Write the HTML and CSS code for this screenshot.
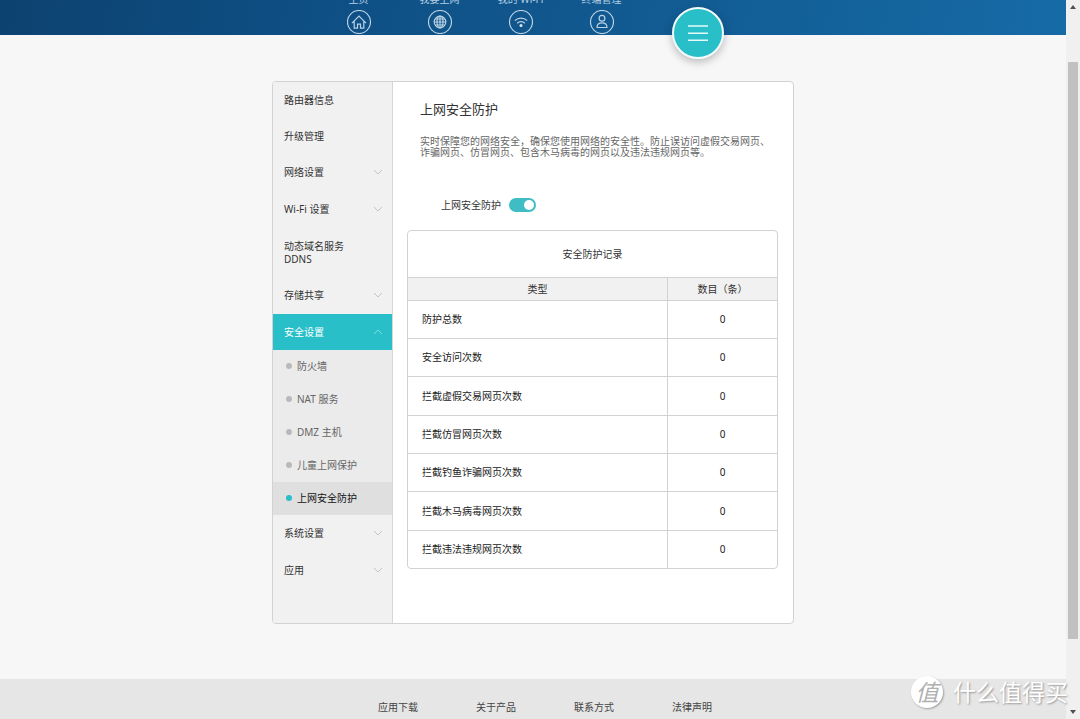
FILE: index.html
```html
<!DOCTYPE html>
<html lang="zh-CN">
<head>
<meta charset="utf-8">
<meta name="viewport" content="width=device-width, initial-scale=1">
<title>上网安全防护</title>
<link rel="stylesheet" href="styles.css">
</head>
<body class="window">
<div class="page">
  <header class="header">
    <div class="header-inner">
      <nav class="topnav">
        <a class="topnav-link" href="#">主页
          <svg class="topnav-icon" viewBox="0 0 24 24"><circle cx="12" cy="12" r="11.5"/><path d="M5 13.2 12 6l7 7.2M7.2 11.2v7h3.3v-4h3v4h3.3v-7"/></svg></a>
        <a class="topnav-link" href="#">我要上网
          <svg class="topnav-icon" viewBox="0 0 24 24"><circle cx="12" cy="12" r="11.5"/><circle cx="12" cy="12" r="5.8"/><path d="M12 6v12M6 12h12M7.2 9h9.6M7.2 15h9.6"/><ellipse cx="12" cy="12" rx="3" ry="5.8"/></svg></a>
        <a class="topnav-link" href="#">我的 Wi-Fi
          <svg class="topnav-icon" viewBox="0 0 24 24"><circle cx="12" cy="12" r="11.5"/><path d="M5.8 10.6a9 9 0 0 1 12.4 0M8.2 13.2a5.4 5.4 0 0 1 7.6 0"/><circle class="dot" cx="12" cy="15.6" r="1.5"/></svg></a>
        <a class="topnav-link" href="#">终端管理
          <svg class="topnav-icon" viewBox="0 0 24 24"><circle cx="12" cy="12" r="11.5"/><circle cx="12" cy="8.2" r="2.9"/><path d="M7 17.5c0-3 1.8-4.7 5-4.7s5 1.7 5 4.7z"/></svg></a>
      </nav>
      <button class="menu-button" type="button" aria-label="更多功能">
        <svg class="menu-icon" viewBox="0 0 20 16"><path d="M0 1h20M0 8.3h20M0 15.2h20"/></svg>
      </button>
    </div>
  </header>

  <main class="main">
    <div class="card">
      <nav class="sidebar">
        <a class="side-item" href="#">路由器信息</a>
        <a class="side-item" href="#">升级管理</a>
        <button class="side-item side-group" type="button" aria-expanded="false">网络设置<svg class="chevron" viewBox="0 0 10 6"><path d="M1 1l4 4 4-4"/></svg></button>
        <button class="side-item side-group" type="button" aria-expanded="false">Wi-Fi 设置<svg class="chevron" viewBox="0 0 10 6"><path d="M1 1l4 4 4-4"/></svg></button>
        <a class="side-item" href="#">动态域名服务<br>DDNS</a>
        <button class="side-item side-group" type="button" aria-expanded="false">存储共享<svg class="chevron" viewBox="0 0 10 6"><path d="M1 1l4 4 4-4"/></svg></button>
        <button class="side-item side-group side-open" type="button" aria-expanded="true">安全设置<svg class="chevron" viewBox="0 0 10 6"><path d="M1 5l4-4 4 4"/></svg></button>
        <ul class="submenu">
          <li><a class="sub-item" href="#">防火墙</a></li>
          <li><a class="sub-item" href="#">NAT 服务</a></li>
          <li><a class="sub-item" href="#">DMZ 主机</a></li>
          <li><a class="sub-item" href="#">儿童上网保护</a></li>
          <li><a class="sub-item sub-current" href="#" aria-current="page">上网安全防护</a></li>
        </ul>
        <button class="side-item side-group" type="button" aria-expanded="false">系统设置<svg class="chevron" viewBox="0 0 10 6"><path d="M1 1l4 4 4-4"/></svg></button>
        <button class="side-item side-group" type="button" aria-expanded="false">应用<svg class="chevron" viewBox="0 0 10 6"><path d="M1 1l4 4 4-4"/></svg></button>
      </nav>

      <section class="content">
        <h1 class="title">上网安全防护</h1>
        <p class="description">实时保障您的网络安全，确保您使用网络的安全性。防止误访问虚假交易网页、<br>诈骗网页、仿冒网页、包含木马病毒的网页以及违法违规网页等。</p>
        <div class="switch-row">
          <label for="protect">上网安全防护</label>
          <input class="switch" id="protect" type="checkbox" role="switch" checked>
        </div>
        <div class="record">
          <table class="record-table">
            <caption class="record-title">安全防护记录</caption>
            <thead>
              <tr><th scope="col">类型</th><th scope="col" class="count">数目（条）</th></tr>
            </thead>
            <tbody>
              <tr><td>防护总数</td><td class="count">0</td></tr>
              <tr><td>安全访问次数</td><td class="count">0</td></tr>
              <tr><td>拦截虚假交易网页次数</td><td class="count">0</td></tr>
              <tr><td>拦截仿冒网页次数</td><td class="count">0</td></tr>
              <tr><td>拦截钓鱼诈骗网页次数</td><td class="count">0</td></tr>
              <tr><td>拦截木马病毒网页次数</td><td class="count">0</td></tr>
              <tr><td>拦截违法违规网页次数</td><td class="count">0</td></tr>
            </tbody>
          </table>
        </div>
      </section>
    </div>
  </main>

  <footer class="footer">
    <a class="footer-link" href="#">应用下载</a>
    <a class="footer-link" href="#">关于产品</a>
    <a class="footer-link" href="#">联系方式</a>
    <a class="footer-link" href="#">法律声明</a>
  </footer>
</div>

<div class="scrollbar" aria-hidden="true">
  <svg class="arrow" viewBox="0 0 6 4"><path d="M3 0l3 4H0z"/></svg>
  <div class="thumb"></div>
  <svg class="arrow" viewBox="0 0 6 4"><path d="M0 0h6L3 4z"/></svg>
</div>

<div class="watermark"><span class="watermark-badge">值</span><span>什么值得买</span></div>
</body>
</html>
```
FILE: styles.css
```css
* { box-sizing: border-box; }

.window {
  position: relative;
  display: grid;
  grid-template-columns: 1fr 14px;
  min-height: 100vh;
  margin: 0;
  overflow: hidden;
  background: #f7f7f7;
  color: #333;
  font: 10px/13px "Noto Sans", "Noto Sans CJK SC", sans-serif;
}

a { color: inherit; text-decoration: none; }

.page { display: flex; flex-direction: column; }

/* Header */
.header {
  height: 35px;
  background: linear-gradient(100deg, #0c4270 0%, #0e4f84 30%, #125c94 65%, #166ba6 100%);
}
.header-inner {
  display: flex;
  align-items: flex-start;
  gap: 30px;
  width: 522px;
  margin: 0 auto;
  padding-left: 46px;
}
.topnav { display: flex; margin-top: -7px; }
.topnav-link {
  display: flex;
  flex-direction: column;
  align-items: center;
  gap: 4px;
  width: 81px;
  color: #b4cfe2;
}
.topnav-icon {
  width: 24px;
  height: 24px;
  fill: none;
  stroke: #b9d2e4;
  stroke-width: 1.2;
}
.topnav-icon .dot { fill: #dbe8f1; stroke: none; }
.menu-button {
  display: grid;
  place-items: center;
  width: 52px;
  height: 52px;
  margin-top: 7px;
  padding: 0;
  border: 2px solid #f4fbfc;
  border-radius: 50%;
  background: #28bfc8;
  box-shadow: 0 3px 8px rgba(0, 0, 0, 0.25);
}
.menu-icon { width: 20px; height: 16px; stroke: #e6fafa; stroke-width: 1.6; }

/* Card */
.main { flex: 1; padding: 46px 0 54px; }
.card {
  display: grid;
  grid-template-columns: 120px 1fr;
  width: 522px;
  margin: 0 auto;
  overflow: hidden;
  border: 1px solid #d2d2d2;
  border-radius: 4px;
  background: #fff;
}

/* Sidebar */
.sidebar { border-right: 1px solid #d6d6d6; background: #f1f1f1; }
.side-item {
  display: block;
  padding: 12px 11px 11px;
}
.side-group {
  display: flex;
  align-items: center;
  justify-content: space-between;
  width: 100%;
  padding: 12px 9px 12px 11px;
  border: 0;
  background: none;
  color: inherit;
  font: inherit;
}
.side-open { padding-bottom: 11px; background: #28bfc8; color: #fff; }
.chevron { width: 10px; height: 6px; margin-bottom: 2px; fill: none; stroke: #c4c4c4; }
.side-open .chevron { stroke: #82dce1; }

.submenu { margin: 0; padding: 0; list-style: none; background: #ebebeb; }
.sub-item {
  display: flex;
  align-items: center;
  gap: 5px;
  padding: 10px 0 10px 13px;
  color: #666;
}
.sub-item::before {
  content: "";
  width: 6px;
  height: 6px;
  margin-bottom: 2px;
  border-radius: 50%;
  background: #b9b9b9;
}
.sub-current { background: #dfdfdf; color: #111; }
.sub-current::before { background: #28bfc8; }

/* Content */
.content { padding: 17px 15px 54px 14px; }
.title { margin: 0 0 17px 13px; font-size: 13px; font-weight: 400; line-height: 20px; }
.description { margin: 0 0 40px 13px; color: #666; line-height: 11px; white-space: nowrap; }
.switch-row { display: flex; align-items: center; gap: 8px; margin: 0 0 18px 34px; }
.switch {
  display: flex;
  justify-content: flex-end;
  width: 27px;
  height: 14px;
  margin: 0;
  padding: 2px;
  border-radius: 7px;
  appearance: none;
  background: #40bdc4;
}
.switch::before {
  content: "";
  width: 10px;
  height: 10px;
  border-radius: 50%;
  background: #fff;
}
.switch:not(:checked) { justify-content: flex-start; background: #bbb; }

/* Record table */
.record { overflow: hidden; border: 1px solid #d2d2d2; border-radius: 4px; }
.record-table { width: 100%; border-spacing: 0; }
.record-title { padding: 17px 0 16px; }
.record-table th {
  height: 24px;
  padding: 0;
  border-top: 1px solid #d2d2d2;
  border-bottom: 1px solid #d2d2d2;
  background: #f1f1f1;
  font-weight: 400;
}
.record-table td {
  height: 38px;
  padding: 0 14px;
  border-bottom: 1px solid #d2d2d2;
  color: #222;
}
.record-table tr:nth-child(3n) td { height: 39px; }
.record-table tr:last-child td { height: 37px; border-bottom: 0; }
.record-table .count { width: 110px; border-left: 1px solid #d2d2d2; text-align: center; }

/* Footer */
.footer {
  display: flex;
  justify-content: center;
  gap: 58px;
  padding: 22px 0 5px 24px;
  background: #e6e6e6;
}
.footer-link { color: #444; }

/* Scrollbar */
.scrollbar {
  display: flex;
  flex-direction: column;
  align-items: center;
  padding: 5px 0;
  background: #f0f0f0;
}
.arrow { width: 6px; height: 4px; fill: #505050; }
.thumb { width: 10px; height: 577px; margin: 53px 0 auto; background: #c1c1c1; }

/* Watermark */
.watermark {
  position: absolute;
  right: 12px;
  bottom: 11px;
  display: flex;
  align-items: center;
  gap: 10px;
  color: #fff;
  font-size: 23px;
  line-height: 32px;
  text-shadow: 1px 1px 2px rgba(0, 0, 0, 0.35);
}
.watermark-badge {
  width: 32px;
  height: 32px;
  border-radius: 50%;
  background: #fff;
  box-shadow: 1px 1px 2px rgba(0, 0, 0, 0.3);
  color: #b0b0b0;
  font-style: italic;
  text-align: center;
  text-shadow: none;
}
```
